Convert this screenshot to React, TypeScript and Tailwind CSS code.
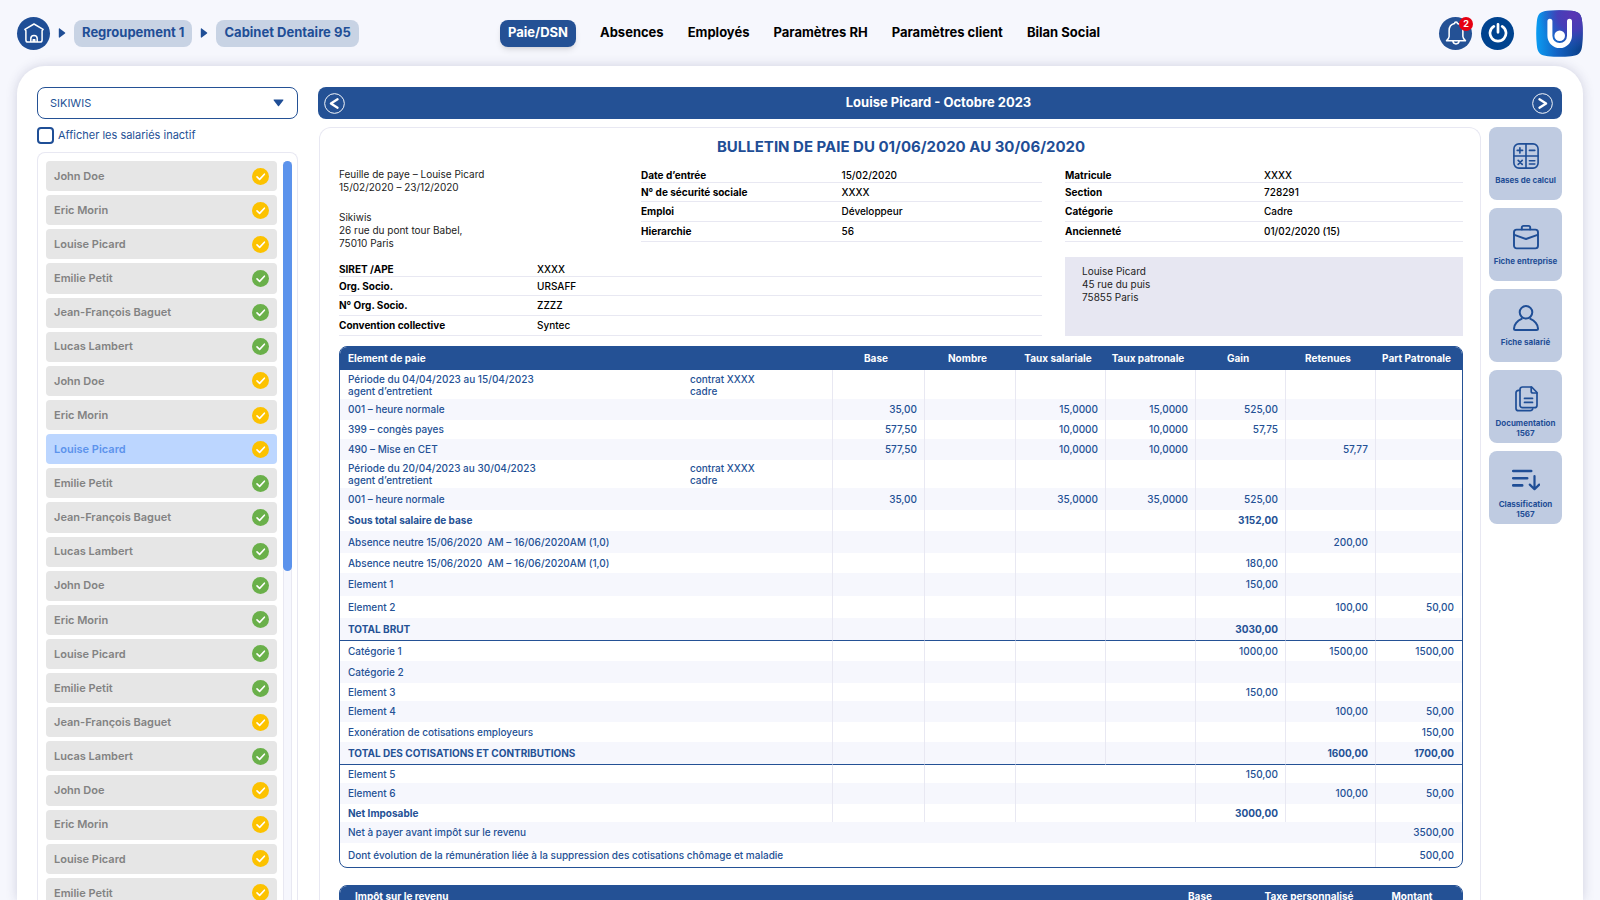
import React from 'react';
import { clsx } from 'clsx';

const YELLOW = 'fill-[#fcc200]';
const GREEN = 'fill-[#6ab04a]';

const names = ['John Doe', 'Eric Morin', 'Louise Picard', 'Emilie Petit', 'Jean-François Baguet', 'Lucas Lambert'];
// y = à vérifier, g = validé
const statuses = 'yyygggyyyggggggg' + 'ygyyyy';
const selected = 8;

const navItems = ['Absences', 'Employés', 'Paramètres RH', 'Paramètres client', 'Bilan Social'];

type Row = {
  h: string;
  label: string;
  sub?: string[];
  cells: string[];
  bold?: boolean;
  line?: boolean;
};

// cells: base, nombre, taux salariale, taux patronale, gain, retenues, part patronale
const rows: Row[] = [
  { h: 'h-[29px]', label: 'Période du 04/04/2023 au 15/04/2023', sub: ['agent d’entretient', 'contrat XXXX', 'cadre'], cells: ['', '', '', '', '', '', ''] },
  { h: 'h-[21px]', label: '001 – heure normale', cells: ['35,00', '', '15,0000', '15,0000', '525,00', '', ''] },
  { h: 'h-[19px]', label: '399 – congès payes', cells: ['577,50', '', '10,0000', '10,0000', '57,75', '', ''] },
  { h: 'h-[21px]', label: '490 – Mise en CET', cells: ['577,50', '', '10,0000', '10,0000', '', '57,77', ''] },
  { h: 'h-[28px]', label: 'Période du 20/04/2023 au 30/04/2023', sub: ['agent d’entretient', 'contrat XXXX', 'cadre'], cells: ['', '', '', '', '', '', ''] },
  { h: 'h-[22px]', label: '001 – heure normale', cells: ['35,00', '', '35,0000', '35,0000', '525,00', '', ''] },
  { h: 'h-[21px]', label: 'Sous total salaire de base', cells: ['', '', '', '', '3152,00', '', ''], bold: true },
  { h: 'h-[22px]', label: 'Absence neutre 15/06/2020  AM – 16/06/2020AM (1,0)', cells: ['', '', '', '', '', '200,00', ''] },
  { h: 'h-[20px]', label: 'Absence neutre 15/06/2020  AM – 16/06/2020AM (1,0)', cells: ['', '', '', '', '180,00', '', ''] },
  { h: 'h-[23px]', label: 'Element 1', cells: ['', '', '', '', '150,00', '', ''] },
  { h: 'h-[22px]', label: 'Element 2', cells: ['', '', '', '', '', '100,00', '50,00'] },
  { h: 'h-[23px]', label: 'TOTAL BRUT', cells: ['', '', '', '', '3030,00', '', ''], bold: true, line: true },
  { h: 'h-[20px]', label: 'Catégorie 1', cells: ['', '', '', '', '1000,00', '1500,00', '1500,00'] },
  { h: 'h-[22px]', label: 'Catégorie 2', cells: ['', '', '', '', '', '', ''] },
  { h: 'h-[18px]', label: 'Element 3', cells: ['', '', '', '', '150,00', '', ''] },
  { h: 'h-[21px]', label: 'Element 4', cells: ['', '', '', '', '', '100,00', '50,00'] },
  { h: 'h-[20px]', label: 'Exonération de cotisations employeurs', cells: ['', '', '', '', '', '', '150,00'] },
  { h: 'h-[23px]', label: 'TOTAL DES COTISATIONS ET CONTRIBUTIONS', cells: ['', '', '', '', '', '1600,00', '1700,00'], bold: true, line: true },
  { h: 'h-[18px]', label: 'Element 5', cells: ['', '', '', '150,00', '', ''] },
  { h: 'h-[21px]', label: 'Element 6', cells: ['', '', '', '', '100,00', '50,00'] },
  { h: 'h-[18px]', label: 'Net Imposable', cells: ['', '', '', '3000,00', '', ''], bold: true },
  { h: 'h-[21px]', label: 'Net à payer avant impôt sur le revenu', cells: ['3500,00'] },
  { h: 'h-[24px]', label: 'Dont évolution de la rémunération liée à la suppression des cotisations chômage et maladie', cells: ['500,00'] },
];

const headings = ['Base', 'Nombre', 'Taux salariale', 'Taux patronale', 'Gain', 'Retenues', 'Part Patronale'];

const rowHeights = ['h-[17px] pt-[2px]', 'h-[19px] pt-px', 'h-5', 'h-5'];

const InfoList: React.FC<{ items: [string, string][]; labelClass: string }> = ({ items, labelClass }) => (
  <dl>
    {items.map(([label, value], i) => (
      <div key={label} className={clsx('flex items-center border-b border-[#e8e8f2]', rowHeights[i])}>
        <dt className={clsx('font-bold', labelClass)}>{label}</dt>
        <dd className="font-medium">{value}</dd>
      </div>
    ))}
  </dl>
);

const CheckIcon: React.FC<{ color: string }> = ({ color }) => (
  <svg viewBox="0 0 17 17" className="size-[17px] shrink-0">
    <circle cx="8.5" cy="8.5" r="8.5" className={color} />
    <path d="M5 8.9 7.6 11.4 12.4 6.2" fill="none" stroke="#fff" strokeWidth="1.6" strokeLinecap="round" strokeLinejoin="round" />
  </svg>
);

const Caret = () => (
  <svg viewBox="0 0 8 10" className="h-[10px] w-2 fill-[#1f4e96]">
    <path d="M.8.9C.8.4 1.3.2 1.7.5L7 4.5c.4.3.4.7 0 1L1.7 9.5C1.3 9.8.8 9.6.8 9.1Z" />
  </svg>
);

const Chevron: React.FC<{ flip?: boolean }> = ({ flip }) => (
  <svg viewBox="0 0 22 22" className={clsx('size-[21px]', flip && 'rotate-180')} fill="none" stroke="#fff">
    <circle cx="11" cy="11" r="10.3" strokeWidth="1" />
    <path d="M14.2 6.6 7.2 11l7 4.4" strokeWidth="2.4" strokeLinecap="round" strokeLinejoin="round" />
  </svg>
);

const iconProps = {
  viewBox: '0 0 26 26',
  className: 'size-[26px]',
  fill: 'none',
  stroke: '#1f4e96',
  strokeWidth: 1.9,
  strokeLinecap: 'round' as const,
  strokeLinejoin: 'round' as const,
};

const tools = [
  {
    lines: ['Bases de calcul'],
    icon: (
      <svg {...iconProps} strokeWidth={1.6}>
        <rect x=".9" y=".9" width="24.2" height="24.2" rx="5" />
        <path d="M13 1v24M1 13h24M4.2 7.4h5.4M6.9 4.7v5.4M16.4 7.4h5.4M5.2 17.4l4 4M9.2 17.4l-4 4M16.4 17.8h5.4M16.4 21h5.4" />
      </svg>
    ),
  },
  {
    lines: ['Fiche entreprise'],
    icon: (
      <svg {...iconProps}>
        <rect x="1" y="5.6" width="24" height="18.8" rx="2.6" />
        <path d="M8.8 5.4V3.6c0-1 .7-1.7 1.7-1.7h5c1 0 1.7.7 1.7 1.7v1.8M1.4 10.8 13 15l11.6-4.2" />
      </svg>
    ),
  },
  {
    lines: ['Fiche salarié'],
    icon: (
      <svg {...iconProps} strokeWidth={2}>
        <circle cx="13" cy="7.3" r="6.3" />
        <path d="M8.6 13.8C4.4 15.6 1 19.6 1 23.4c0 .9.6 1.5 1.5 1.5h21c.9 0 1.5-.6 1.5-1.5 0-3.8-3.4-7.8-7.6-9.6" />
      </svg>
    ),
  },
  {
    lines: ['Documentation', '1567'],
    icon: (
      <svg {...iconProps} strokeWidth={1.7}>
        <path d="M9.500 1h9.200L24 6.500v12.700c0 1.500-1 2.500-2.500 2.500h-12c-1.500 0-2.500-1-2.500-2.500V3.500C7 2 8 1 9.500 1Z" />
        <path d="M18.200 1.200v4c0 1.200.6 1.800 1.800 1.800h3.800M6.800 4.300H5.500C4 4.300 3 5.300 3 6.800v15.400c0 1.500 1 2.500 2.500 2.500h11.800c1.200 0 2-.7 2.400-1.700M11.500 12.400h8M11.500 16.400h8" />
      </svg>
    ),
  },
  {
    lines: ['Classification', '1567'],
    icon: (
      <svg viewBox="0 0 28 26" className="h-[26px] w-7" fill="none" stroke="#1f4e96" strokeWidth="2.2" strokeLinecap="round" strokeLinejoin="round">
        <path d="M1.2 4h18M1.2 11.2h14M1.2 18.4h9" strokeWidth="2.6" />
        <path d="M22.5 9v13M17.800 17.600l4.700 4.600 4.700-4.600" />
      </svg>
    ),
  },
];

const TopBar = () => (
  <header className="grid h-[66px] shrink-0 grid-cols-[1fr_auto_1fr] items-center px-[17px] text-[13px] font-bold">
    <div className="flex items-center text-[#1f4e96]">
      <a href="#" aria-label="Accueil" className="flex size-[33px] items-center justify-center rounded-full bg-[#1f4e96]">
        <svg viewBox="0 0 20 20" className="size-5" fill="none" stroke="#fff" strokeWidth="1.5" strokeLinejoin="round">
          <path d="M10 1 .9 6.300l1 1.400V17c0 1.300.8 2.100 2.100 2.100h12c1.300 0 2.100-.8 2.100-2.100V7.700l1-1.400Z" />
          <path d="M6.800 19v-3.400a3.200 3.200 0 0 1 6.400 0V19M9.200 19v-2.200h1.600V19" />
        </svg>
      </a>
      <span className="px-2"><Caret /></span>
      <a href="#" className="flex h-[27px] items-center rounded-lg bg-[#c8d3e4] px-2">Regroupement 1</a>
      <span className="px-2"><Caret /></span>
      <a href="#" className="flex h-[27px] items-center rounded-lg bg-[#c8d3e4] px-2">Cabinet Dentaire 95</a>
    </div>
    <nav className="flex items-center gap-6 text-black">
      <a href="#" className="flex h-[27px] items-center rounded-lg bg-[#245195] px-2 text-white shadow-md">Paie/DSN</a>
      {navItems.map((item) => (
        <a key={item} href="#">{item}</a>
      ))}
    </nav>
    <div className="flex items-center justify-end">
      <button type="button" aria-label="Notifications" className="relative flex size-[33px] items-center justify-center rounded-full bg-[#245195]">
        <svg viewBox="0 0 20 22" className="h-6 w-[22px]" fill="none" stroke="#fff" strokeWidth="1.4" strokeLinecap="round" strokeLinejoin="round">
          <path d="M8.7 2.300a1.300 1.300 0 0 1 2.600 0c3.200.7 5 3.100 5 6.400v5.500c0 1 .6 2 2.400 3.900H1.300c1.800-1.900 2.400-2.900 2.400-3.900V8.700c0-3.300 1.800-5.700 5-6.400ZM7 18.300c.3 1.700 1.500 2.700 3 2.700s2.700-1 3-2.700" />
        </svg>
        <span className="absolute -right-px top-0 flex size-[14px] items-center justify-center rounded-full bg-[#e60012] text-[9px] leading-none text-white">2</span>
      </button>
      <button type="button" aria-label="Déconnexion" className="ml-[9px] flex size-[33px] items-center justify-center rounded-full bg-[#00438f]">
        <svg viewBox="0 0 20 20" className="size-5" fill="none" stroke="#fff" strokeWidth="2.7" strokeLinecap="round">
          <path d="M10 1.300v8M5.800 3.400a8 8 0 1 0 8.400 0" />
        </svg>
      </button>
      <svg viewBox="0 0 47 47" className="ml-[22px] size-[47px]" aria-label="Sikiwis">
        <defs>
          <linearGradient id="logo-base" x1="0" y1="0" x2="1" y2="0">
            <stop offset="0" stopColor="#0a9cf2" />
            <stop offset=".45" stopColor="#1463c4" />
            <stop offset="1" stopColor="#0b3d86" />
          </linearGradient>
          <radialGradient id="logo-top" cx=".8" cy=".1" r=".75">
            <stop offset="0" stopColor="#5a36b4" />
            <stop offset=".45" stopColor="#4a3cb8" stopOpacity=".9" />
            <stop offset="1" stopColor="#2a5ec8" stopOpacity="0" />
          </radialGradient>
        </defs>
        <path d="M12 .8Q23.500-.4 35 .8C43 1.500 45.500 4 46.200 12Q47.400 23.500 46.200 35C45.500 43 43 45.500 35 46.200Q23.500 47.400 12 46.200C4 45.500 1.500 43 .8 35Q-.4 23.500.8 12C1.500 4 4 1.500 12 .8Z" fill="url(#logo-base)" />
        <path d="M12 .8Q23.500-.4 35 .8C43 1.500 45.500 4 46.200 12Q47.400 23.500 46.200 35C45.500 43 43 45.500 35 46.200Q23.500 47.400 12 46.200C4 45.500 1.500 43 .8 35Q-.4 23.500.8 12C1.500 4 4 1.500 12 .8Z" fill="url(#logo-top)" />
        <path d="M13.900 11.200v14.600a9.800 9.800 0 0 0 19.600 0V11.200" fill="none" stroke="#fff" strokeWidth="5" strokeLinecap="round" />
        <circle cx="23.700" cy="25.700" r="5.300" fill="#fff" />
      </svg>
    </div>
  </header>
);

const Sidebar = () => (
  <aside className="flex w-[261px] shrink-0 flex-col text-[11px] text-[#245195]">
    <div className="relative">
      <select aria-label="Entreprise" className="h-8 w-full appearance-none rounded-lg border border-[#245195] bg-white pl-3">
        <option>SIKIWIS</option>
      </select>
      <svg viewBox="0 0 11 8" className="pointer-events-none absolute right-[14px] top-3 h-2 w-[11px] fill-[#1f4e96]">
        <path d="M1.200.6h8.600c.6 0 .8.500.4 1L6 7c-.3.400-.7.400-1 0L.8 1.600C.400 1.100.600.600 1.200.600Z" />
      </svg>
    </div>
    <div className="mt-2 flex items-center gap-1">
      <input id="inactifs" type="checkbox" className="size-[17px] appearance-none rounded border-2 border-[#1f4e96] bg-white" />
      <label htmlFor="inactifs" className="leading-[17px]">Afficher les salariés inactif</label>
    </div>
    <div className="mt-2 flex min-h-0 flex-1 justify-between overflow-hidden rounded-t-lg border border-b-0 border-[#e8e8f2] pl-2 pr-[5px] pt-2">
      <ul className="grid h-[747px] w-[231px] auto-rows-fr gap-1">
        {[...statuses].map((status, i) => (
          <li key={i} className="flex">
            <button
              type="button"
              className={clsx(
                'flex w-full items-center justify-between rounded px-2 font-semibold',
                i === selected ? 'bg-[#bcd6ff] text-[#5c93ec]' : 'bg-[#e6e6e6] text-[#828282]'
              )}
            >
              {names[i % names.length]}
              <CheckIcon color={status === 'y' ? YELLOW : GREEN} />
            </button>
          </li>
        ))}
      </ul>
      <div className="w-[9px] rounded-t-full border-x border-[#e8e8f2] bg-[#f6f7fd]">
        <div className="-mx-px h-[410px] rounded-full bg-[#5c93ec]" />
      </div>
    </div>
  </aside>
);

const PayTable = () => (
  <div className="mt-[10px] overflow-hidden rounded-lg border border-[#245195]">
    <table className="w-full table-fixed border-separate border-spacing-0 text-[#245195]">
      <colgroup>
        <col />
        <col className="w-[92px]" />
        <col className="w-[91px]" />
        <col className="w-[90px]" />
        <col className="w-[90px]" />
        <col className="w-[90px]" />
        <col className="w-[90px]" />
        <col className="w-[87px]" />
      </colgroup>
      <thead className="bg-[#245195] text-white">
        <tr className="h-[23px]">
          <th className="p-0 pl-2 text-left font-bold">Element de paie</th>
          {headings.map((heading) => (
            <th key={heading} className="whitespace-nowrap p-0 pr-1 font-bold">{heading}</th>
          ))}
        </tr>
      </thead>
      <tbody>
        {rows.map((row, i) => (
          <tr key={i} className={clsx(row.h, i % 2 === 1 && 'bg-[#f6f7fd]', row.bold ? 'font-bold' : 'font-medium')}>
            <td colSpan={row.cells.length === 1 ? 7 : 1} className={clsx('whitespace-pre p-0 pl-2', row.line && 'border-b border-[#245195]')}>
              {row.sub ? (
                <div className="grid grid-cols-[342px_1fr] leading-3">
                  <span>{row.label}</span>
                  <span>{row.sub[1]}</span>
                  <span>{row.sub[0]}</span>
                  <span>{row.sub[2]}</span>
                </div>
              ) : (
                row.label
              )}
            </td>
            {row.cells.map((cell, c) => (
              <td
                key={c}
                colSpan={row.cells.length === 6 && c === 2 ? 2 : 1}
                className={clsx(
                  'border-l border-l-[#e8e8f2] p-0 pr-[7px] text-right last:pr-2',
                  row.line && 'border-b border-b-[#245195]'
                )}
              >
                {cell}
              </td>
            ))}
          </tr>
        ))}
      </tbody>
    </table>
  </div>
);

const TaxTable = () => (
  <div className="mt-[17px] overflow-hidden rounded-lg border border-[#245195]">
    <table className="w-full table-fixed border-separate border-spacing-0 text-[#245195]">
      <thead className="bg-[#245195] text-white">
        <tr className="h-5">
          <th className="p-0 pl-[15px] text-left font-bold">Impôt sur le revenu</th>
          <th className="w-28 p-0 font-bold">Base</th>
          <th className="w-[106px] whitespace-nowrap p-0 font-bold">Taxe personnalisé</th>
          <th className="w-[100px] p-0 font-bold">Montant</th>
        </tr>
      </thead>
    </table>
  </div>
);

const Bulletin = () => (
  <article className="ml-px min-w-0 flex-1 overflow-hidden rounded-t-xl border border-b-0 border-[#e8e8f2] pl-[19px] pr-[17px] pt-[7px] text-[10px] leading-[13px] text-black">
    <h2 className="text-center text-[15px] font-bold leading-6 text-[#1f4e96]">BULLETIN DE PAIE DU 01/06/2020 AU 30/06/2020</h2>
    <div className="mt-[7px] grid grid-cols-[703fr_398fr] gap-[23px]">
      <div>
        <div className="grid grid-cols-[302fr_401fr]">
          <div className="pt-[2px] text-[#222]">
            <p>Feuille de paye – Louise Picard<br />15/02/2020 – 23/12/2020</p>
            <address className="mt-[17px] not-italic">Sikiwis<br />26 rue du pont tour Babel,<br />75010 Paris</address>
          </div>
          <InfoList
            labelClass="w-1/2"
            items={[['Date d’entrée', '15/02/2020'], ['N° de sécurité sociale', 'XXXX'], ['Emploi', 'Développeur'], ['Hierarchie', '56']]}
          />
        </div>
        <div className="mt-[10px]">
          <InfoList
            labelClass="w-[198px]"
            items={[['SIRET /APE', 'XXXX'], ['Org. Socio.', 'URSAFF'], ['N° Org. Socio.', 'ZZZZ'], ['Convention collective', 'Syntec']]}
          />
        </div>
      </div>
      <div className="flex flex-col">
        <InfoList
          labelClass="w-1/2"
          items={[['Matricule', 'XXXX'], ['Section', '728291'], ['Catégorie', 'Cadre'], ['Ancienneté', '01/02/2020 (15)']]}
        />
        <address className="mt-[15px] flex-1 bg-[#e7e7f2] px-[17px] py-2 not-italic text-[#222]">
          Louise Picard<br />45 rue du puis<br />75855 Paris
        </address>
      </div>
    </div>
    <PayTable />
    <TaxTable />
  </article>
);

export default function App() {
  return (
    <div className="flex h-screen flex-col overflow-hidden bg-[#f6f7fd] font-[Inter,sans-serif]">
      <TopBar />
      <main className="mx-[17px] flex min-h-0 flex-1 gap-5 rounded-t-[28px] bg-white pl-5 pr-[21px] pt-[21px] shadow-[0_0_12px_rgba(40,40,90,0.18)]">
        <Sidebar />
        <section className="flex min-w-0 flex-1 flex-col">
          <div className="flex h-8 shrink-0 items-center justify-between rounded-lg bg-[#245195] pl-[6px] pr-[9px] text-white">
            <button type="button" aria-label="Salarié précédent"><Chevron /></button>
            <h1 className="text-[13px] font-bold">Louise Picard - Octobre 2023</h1>
            <button type="button" aria-label="Salarié suivant"><Chevron flip /></button>
          </div>
          <div className="mt-2 flex min-h-0 flex-1 gap-2">
            <Bulletin />
            <div className="flex w-[73px] shrink-0 flex-col gap-2">
              {tools.map((tool) => (
                <button
                  key={tool.lines[0]}
                  type="button"
                  className="flex h-[73px] w-full flex-col items-center rounded-lg bg-[#bfcbe1] pt-4 text-[8px] font-bold leading-[10px] text-[#1f4e96]"
                >
                  {tool.icon}
                  <span className="mt-[6px] whitespace-nowrap">
                    {tool.lines.map((line) => (
                      <span key={line} className="block">{line}</span>
                    ))}
                  </span>
                </button>
              ))}
            </div>
          </div>
        </section>
      </main>
    </div>
  );
}
